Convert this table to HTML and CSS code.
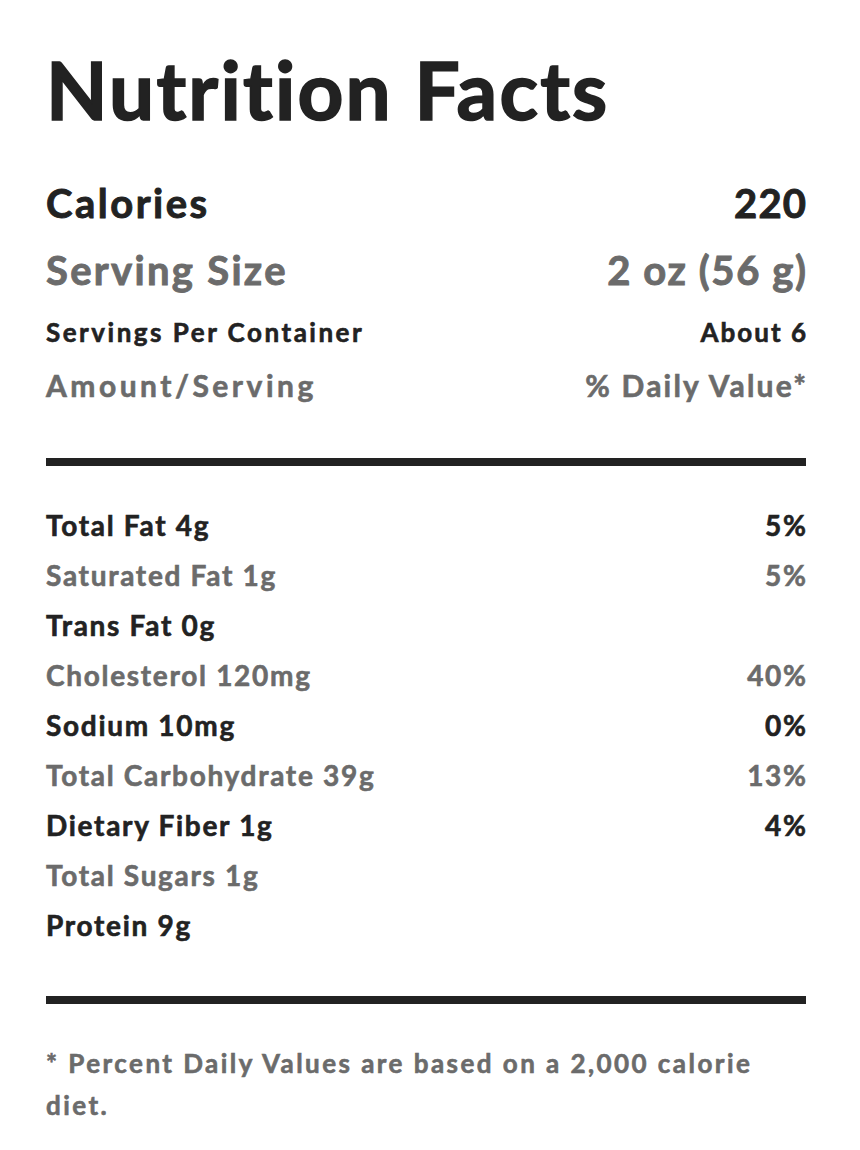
FILE: index.html
```html
<!DOCTYPE html>
<html lang="en">
<head>
<meta charset="utf-8">
<title>Nutrition Facts</title>
<link rel="stylesheet" href="styles.css">
</head>
<body>
<div class="label">
  <h1 class="title">Nutrition Facts</h1>
  <div class="row calories"><span>Calories</span><span class="val">220</span></div>
  <div class="row serving muted"><span>Serving Size</span><span class="val">2 oz (56 g)</span></div>
  <div class="row per"><span>Servings Per Container</span><span class="val">About 6</span></div>
  <div class="row amount muted"><span class="amount-left">Amount/Serving</span><span class="val">% Daily Value*</span></div>
  <div class="bar bar-top"></div>
  <div class="nutrients">
    <div class="row item"><span>Total Fat 4g</span><span class="val">5%</span></div>
    <div class="row item muted"><span>Saturated Fat 1g</span><span class="val">5%</span></div>
    <div class="row item"><span>Trans Fat 0g</span><span class="val"></span></div>
    <div class="row item muted"><span>Cholesterol 120mg</span><span class="val">40%</span></div>
    <div class="row item"><span>Sodium 10mg</span><span class="val">0%</span></div>
    <div class="row item muted"><span>Total Carbohydrate 39g</span><span class="val">13%</span></div>
    <div class="row item"><span>Dietary Fiber 1g</span><span class="val">4%</span></div>
    <div class="row item muted"><span>Total Sugars 1g</span><span class="val"></span></div>
    <div class="row item"><span>Protein 9g</span><span class="val"></span></div>
  </div>
  <div class="bar bar-bottom"></div>
  <p class="note">* Percent Daily Values are based on a 2,000 calorie diet.</p>
</div>
</body>
</html>
```
FILE: styles.css
```css
html, body {
  margin: 0;
  padding: 0;
  background: #ffffff;
}
body {
  font-family: "Lato", "Liberation Sans", sans-serif;
  font-weight: 700;
  color: #222222;
}
.label {
  width: 760px;
  padding: 39px 0 0 46px;
}
.title {
  margin: 0;
  font-size: 80px;
  line-height: 100px;
  font-weight: 700;
  letter-spacing: 2.2px;
  -webkit-text-stroke: 1.6px currentColor;
}
.row {
  display: flex;
  justify-content: space-between;
  align-items: baseline;
  -webkit-text-stroke: 0.6px currentColor;
}
.muted {
  color: #6b6b6b;
}
.calories {
  margin-top: 40px;
  font-size: 40px;
  line-height: 48px;
  letter-spacing: 2.5px;
  -webkit-text-stroke: 0.9px currentColor;
}
.calories .val {
  letter-spacing: 1.2px;
  margin-right: -1.2px;
}
.serving {
  margin-top: 19px;
  font-size: 40px;
  line-height: 48px;
  letter-spacing: 2.3px;
  -webkit-text-stroke: 0.9px currentColor;
}
.serving .val {
  letter-spacing: 1.6px;
  margin-right: -1.6px;
}
.per {
  margin-top: 20px;
  font-size: 26px;
  line-height: 36px;
  letter-spacing: 2.5px;
}
.per .val {
  letter-spacing: 2px;
  margin-right: -2px;
}
.amount {
  margin-top: 15px;
  font-size: 30px;
  line-height: 40px;
  letter-spacing: 2.2px;
}
.amount .val {
  margin-right: -2.2px;
}
.amount-left {
  letter-spacing: 3.5px;
}
.bar {
  height: 8px;
  background: #222222;
}
.bar-top {
  margin-top: 53px;
}
.nutrients {
  margin-top: 34px;
}
.item {
  font-size: 28px;
  line-height: 50px;
  letter-spacing: 1.7px;
}
.item .val {
  margin-right: -1.7px;
}
.bar-bottom {
  margin-top: 46px;
}
.note {
  margin: 38px 0 0;
  font-size: 26px;
  line-height: 42px;
  color: #6b6b6b;
  width: 740px;
  letter-spacing: 2.45px;
  -webkit-text-stroke: 0.6px currentColor;
}
```
